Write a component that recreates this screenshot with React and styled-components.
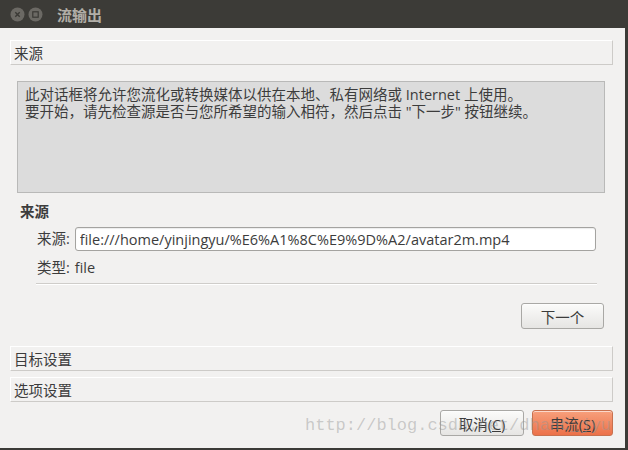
import React from 'react'
import styled, { createGlobalStyle } from 'styled-components'

const GlobalStyle = createGlobalStyle`
  html, body {
    margin: 0;
    padding: 0;
    background: #3c3b37;
  }
  body {
    font-family: "Open Sans", "Noto Sans CJK SC", sans-serif;
    font-size: 14.5px;
    color: #3c3c3c;
  }
`

function WindowButtons() {
  return (
    <WinButtons>
      <svg width="15" height="15" viewBox="0 0 15 15">
        <circle cx="7.5" cy="7.5" r="7" fill="#6b6964" />
        <path d="M5.3 5.3 L9.7 9.7 M9.7 5.3 L5.3 9.7" stroke="#3a3935" strokeWidth="1.4" />
      </svg>
      <svg width="15" height="15" viewBox="0 0 15 15">
        <circle cx="7.5" cy="7.5" r="7" fill="#6b6964" />
        <rect x="4.8" y="4.8" width="5.4" height="5.4" fill="none" stroke="#3a3935" strokeWidth="1.2" />
      </svg>
    </WinButtons>
  )
}

function App() {
  return (
    <>
      <GlobalStyle />
      <Window>
        <TitleBar>
          <WindowButtons />
          <Title>流输出</Title>
        </TitleBar>
        <Content>
          <SectionHeader>来源</SectionHeader>
          <SectionBody>
            <InfoBox>
              <p>此对话框将允许您流化或转换媒体以供在本地、私有网络或 Internet 上使用。</p>
              <p>要开始，请先检查源是否与您所希望的输入相符，然后点击 "下一步" 按钮继续。</p>
            </InfoBox>
            <SubHeading>来源</SubHeading>
            <FieldGrid>
              <FieldLabel>来源:</FieldLabel>
              <Input defaultValue="file:///home/yinjingyu/%E6%A1%8C%E9%9D%A2/avatar2m.mp4" />
              <FieldLabel>类型:</FieldLabel>
              <FieldValue>file</FieldValue>
            </FieldGrid>
            <Separator />
            <NextRow>
              <Button $width={83}>下一个</Button>
            </NextRow>
          </SectionBody>
          <SectionHeader $top={17}>目标设置</SectionHeader>
          <SectionHeader $top={6}>选项设置</SectionHeader>
          <Footer>
            <Button $width={84}>取消(<u>C</u>)</Button>
            <Button $width={81} $primary>串流(<u>S</u>)</Button>
            <Watermark>http://blog.csdn.net/dhanc_jyu</Watermark>
          </Footer>
        </Content>
      </Window>
    </>
  )
}

export default App

const Window = styled.div`
  width: 625px;
  height: 448px;
  display: flex;
  flex-direction: column;
  background: #f2f1f0;
`

const TitleBar = styled.div`
  height: 28px;
  flex-shrink: 0;
  display: flex;
  align-items: center;
  padding-left: 10px;
  background: #3c3b37;
`

const WinButtons = styled.div`
  display: flex;
  gap: 3px;
  svg {
    display: block;
  }
`

const Title = styled.div`
  margin-left: 14px;
  font-weight: bold;
  font-size: 15px;
  color: #b1aea7;
  font-family: "Noto Sans CJK SC", sans-serif;
`

const Content = styled.div`
  flex: 1;
  display: flex;
  flex-direction: column;
  padding: 0 12px 0 10px;
  position: relative;
`

const SectionHeader = styled.div`
  margin-top: ${p => p.$top ?? 12}px;
  height: 25px;
  box-sizing: border-box;
  display: flex;
  align-items: center;
  padding-left: 3px;
  border: 1px solid;
  border-color: #ffffff #cdcbc8 #cdcbc8 #ffffff;
  background: #f2f1f0;
`

const SectionBody = styled.div`
  display: flex;
  flex-direction: column;
  padding: 0 8px 0 7px;
`

const InfoBox = styled.div`
  margin-top: 16px;
  height: 112px;
  box-sizing: border-box;
  padding: 4px 7px;
  background: #dcdcdc;
  border: 1px solid #b9b9b8;
  line-height: 17px;
  p {
    margin: 0;
  }
`

const SubHeading = styled.div`
  margin-top: 10px;
  margin-left: 3px;
  font-weight: bold;
  line-height: 18px;
`

const FieldGrid = styled.div`
  display: grid;
  grid-template-columns: auto 1fr;
  column-gap: 5px;
  row-gap: 8px;
  align-items: center;
  margin: 6px 9px 0 20px;
`

const FieldLabel = styled.div`
  line-height: 18px;
`

const FieldValue = styled.div`
  line-height: 18px;
`

const Input = styled.input`
  height: 24px;
  box-sizing: border-box;
  padding: 0 4px;
  border: 1px solid #a4a3a0;
  border-radius: 3px;
  background: #ffffff;
  box-shadow: inset 0 1px 1px rgba(0, 0, 0, 0.08);
  font: inherit;
  color: #3c3c3c;
  outline: none;
`

const Separator = styled.div`
  margin: 6px 8px 0 19px;
  height: 1px;
  background: #cfcdca;
  border-bottom: 1px solid #ffffff;
`

const NextRow = styled.div`
  display: flex;
  justify-content: flex-end;
  margin-top: 18px;
  padding-right: 1px;
`

const Button = styled.button`
  width: ${p => p.$width}px;
  height: 26px;
  box-sizing: border-box;
  padding: 0;
  border-radius: 3px;
  font: inherit;
  color: #3c3c3c;
  border: 1px solid ${p => (p.$primary ? '#c8714f' : '#a9a8a5')};
  background: ${p =>
    p.$primary
      ? 'linear-gradient(#f7a07c, #ec7149)'
      : 'linear-gradient(#fbfbfa, #e6e5e3)'};
  box-shadow: inset 0 1px 0 rgba(255, 255, 255, 0.6);
  u {
    text-decoration-thickness: 1px;
  }
`

const Footer = styled.div`
  position: relative;
  display: flex;
  justify-content: flex-end;
  gap: 8px;
  margin-top: 8px;
`

const Watermark = styled.div`
  position: absolute;
  left: 295px;
  top: 6px;
  font-family: "Liberation Mono", monospace;
  font-size: 17px;
  color: rgba(150, 150, 150, 0.45);
  pointer-events: none;
  white-space: nowrap;
`
